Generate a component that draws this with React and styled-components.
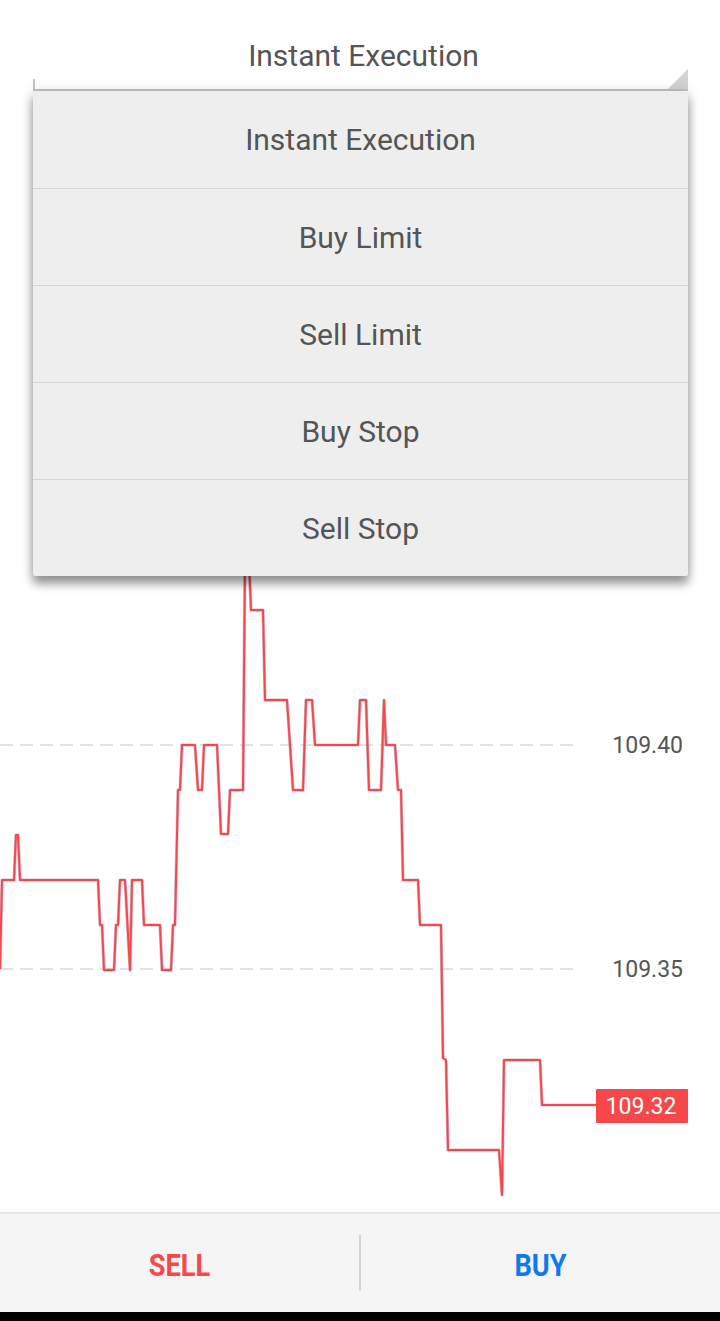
import React from 'react'
import styled, { createGlobalStyle } from 'styled-components';

const GlobalStyle = createGlobalStyle`
  html, body {
    margin: 0;
    padding: 0;
    background: #fff;
  }
  body {
    font-family: Roboto, "Noto Sans", "Liberation Sans", sans-serif;
  }
`;

const orderTypes = ["Instant Execution", "Buy Limit", "Sell Limit", "Buy Stop", "Sell Stop"];

// price line, x in px, y in page px
const pricePoints = [
  [0,969],[2,880],[14,880],[16,835],[18,835],[20,880],[98,880],[100,925],[102,925],[104,970],
  [114,970],[116,925],[118,925],[120,880],[125,880],[130,970],[132,880],[142,880],[144,925],
  [160,925],[162,970],[171,970],[173,925],[175,925],[178,790],[180,790],[182,745],[195,745],
  [198,790],[202,790],[204,745],[217,745],[221,834],[228,834],[230,790],[243,790],[245,560],
  [249,560],[251,610],[263,610],[265,700],[287,700],[290,745],[293,790],[303,790],[306,700],
  [312,700],[315,745],[358,745],[360,700],[366,700],[369,790],[381,790],[384,700],[386,745],
  [395,745],[398,790],[401,790],[403,880],[418,880],[420,925],[441,925],[443,1058],[446,1060],
  [448,1150],[499,1150],[502,1195],[504,1060],[540,1060],[542,1105],[597,1105]
];

const gridLines = [
  { y: 745, label: "109.40" },
  { y: 969, label: "109.35" },
];

const App = () => {
  const points = pricePoints.map((p) => p.join(",")).join(" ");
  return (
    <>
      <GlobalStyle />
      <Page>
        <Header>
          <Spinner>Instant Execution</Spinner>
        </Header>

        <ChartArea>
          <svg width="720" height="1121" viewBox="0 91 720 1121">
            {gridLines.map((g) => (
              <g key={g.label}>
                <line x1="0" y1={g.y} x2="577" y2={g.y} stroke="#e2e2e2" strokeWidth="2" strokeDasharray="13 7" />
                <text x="683" y={g.y + 8} textAnchor="end" fontFamily="Roboto, sans-serif" fontSize="23" fill="#555">{g.label}</text>
              </g>
            ))}
            <polyline points={points} fill="none" stroke="#b57a9a" strokeOpacity="0.5" strokeWidth="3.2" strokeLinejoin="round" />
            <polyline points={points} fill="none" stroke="#f6474b" strokeWidth="2" strokeLinejoin="round" />
            <rect x="596" y="1089" width="92" height="34" rx="1" fill="#f6474b" />
            <text x="641" y="1114" textAnchor="middle" fontFamily="Roboto, sans-serif" fontSize="23" fill="#fff">109.32</text>
          </svg>
        </ChartArea>

        <BottomBar>
          <Action $color="#f6474b">SELL</Action>
          <Divider />
          <Action $color="#1078f0">BUY</Action>
        </BottomBar>
        <NavBar />

        <Dropdown>
          {orderTypes.map((t) => (
            <Option key={t}>{t}</Option>
          ))}
        </Dropdown>
      </Page>
    </>
  )
}

const Page = styled.div`
  position: relative;
  width: 720px;
  height: 1321px;
  display: flex;
  flex-direction: column;
  overflow: hidden;
  background: #fff;
`;

const Header = styled.div`
  height: 91px;
  padding: 0 32px 0 33px;
  display: flex;
  background: #fff;
`;

const Spinner = styled.div`
  position: relative;
  flex: 1;
  display: flex;
  align-items: center;
  justify-content: center;
  padding: 22px 0 0 6px;
  border-bottom: 2px solid #c4c4c4;
  font-size: 30px;
  color: #555;
  &::before {
    content: "";
    position: absolute;
    left: 0;
    bottom: 0;
    width: 2px;
    height: 10px;
    background: #c4c4c4;
  }
  &::after {
    content: "";
    position: absolute;
    right: 0;
    bottom: 0;
    border-style: solid;
    border-width: 0 0 20px 20px;
    border-color: transparent transparent #d2d2d2 transparent;
  }
`;

const ChartArea = styled.div`
  flex: 1;
  svg {
    display: block;
  }
`;

const Dropdown = styled.div`
  position: absolute;
  top: 91px;
  left: 33px;
  width: 655px;
  background: #eeeeee;
  border-radius: 2px;
  box-shadow: 0 8px 10px rgba(0, 0, 0, 0.35), 0 2px 14px rgba(0, 0, 0, 0.2);
  display: flex;
  flex-direction: column;
  z-index: 2;
`;

const Option = styled.div`
  height: 97px;
  display: flex;
  align-items: center;
  justify-content: center;
  font-size: 30px;
  color: #555;
  box-sizing: border-box;
  & + & {
    border-top: 1px solid #d6d6d6;
  }
`;

const BottomBar = styled.div`
  height: 98px;
  border-top: 2px solid #e6e6e6;
  background: #f5f5f5;
  display: flex;
  align-items: center;
`;

const Action = styled.div`
  flex: 1;
  text-align: center;
  font-size: 32px;
  font-weight: 700;
  color: ${({ $color }) => $color};
  transform: scaleX(0.85);
  padding-top: 4px;
`;

const Divider = styled.div`
  width: 2px;
  height: 56px;
  background: #d4d4d4;
`;

const NavBar = styled.div`
  height: 9px;
  background: #000;
`;

export default App
